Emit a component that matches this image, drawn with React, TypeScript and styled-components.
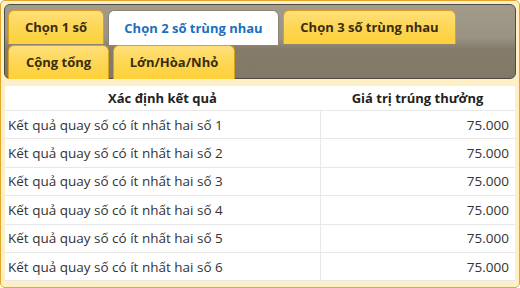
import React from "react";
import styled, { createGlobalStyle } from "styled-components";

const GlobalStyle = createGlobalStyle`
  html, body {
    margin: 0;
    padding: 0;
    background: #ffffff;
  }
  body {
    font-family: "Open Sans", "DejaVu Sans", sans-serif;
  }
`;

const Frame = styled.div`
  box-sizing: border-box;
  width: 520px;
  height: 288px;
  border: 1px solid #e2a62a;
  border-radius: 5px;
  background: #fdf0c6;
  padding: 3px 3px 0 3px;
`;

const TabBar = styled.div`
  box-sizing: border-box;
  height: 75px;
  border: 1px solid #4e4a42;
  border-radius: 6px;
  background: linear-gradient(#a29a8b 0%, #9a9283 45%, #857c6c 60%, #817867 100%);
  padding: 5px 3px 0 3px;
  display: flex;
  flex-wrap: wrap;
  align-content: flex-start;
  column-gap: 4px;
  row-gap: 1px;
`;

const Tab = styled.div<{ $active?: boolean; $w: number }>`
  box-sizing: border-box;
  width: ${(p) => p.$w}px;
  height: ${(p) => (p.$active ? 35 : 34)}px;
  border: 1px solid ${(p) => (p.$active ? "#8a8478" : "#d9a21d")};
  border-bottom: none;
  border-radius: 6px 6px 0 0;
  background: ${(p) =>
    p.$active ? "#ffffff" : "linear-gradient(#fee07a 0%, #fdd654 50%, #fcd139 100%)"};
  color: ${(p) => (p.$active ? "#1a6fbf" : "#3a2c10")};
  font-size: 13px;
  font-weight: 700;
  display: flex;
  align-items: center;
  justify-content: center;
  padding-bottom: 1px;
  margin-bottom: ${(p) => (p.$active ? -1 : 0)}px;
`;

const Table = styled.div`
  margin: 7px 1px 0 1px;
  background: #ffffff;
  display: grid;
  grid-template-columns: 315px 1fr;
`;

const HeadCell = styled.div`
  height: 25px;
  box-sizing: border-box;
  display: flex;
  align-items: center;
  justify-content: center;
  font-size: 13px;
  font-weight: 700;
  color: #222222;
  border-bottom: 1px solid #e8e8e8;
`;

const Cell = styled.div<{ $right?: boolean }>`
  height: 28.4px;
  box-sizing: border-box;
  display: flex;
  align-items: center;
  justify-content: ${(p) => (p.$right ? "flex-end" : "flex-start")};
  padding: 0 ${(p) => (p.$right ? 6 : 3)}px 0 ${(p) => (p.$right ? 0 : 3)}px;
  font-size: 13.5px;
  color: #333333;
  border-bottom: 1px solid #e8e8e8;
  border-left: ${(p) => (p.$right ? "1px solid #e8e8e8" : "none")};
`;

const tabs = [
  { label: "Chọn 1 số", w: 96 },
  { label: "Chọn 2 số trùng nhau", w: 171, active: true },
  { label: "Chọn 3 số trùng nhau", w: 173 },
  { label: "Cộng tổng", w: 101 },
  { label: "Lớn/Hòa/Nhỏ", w: 122 },
];

const rows = [1, 2, 3, 4, 5, 6];

export default function App() {
  return (
    <>
      <GlobalStyle />
      <Frame>
        <TabBar>
          {tabs.map((t) => (
            <Tab key={t.label} $active={t.active} $w={t.w}>
              {t.label}
            </Tab>
          ))}
        </TabBar>
        <Table>
          <HeadCell>Xác định kết quả</HeadCell>
          <HeadCell>Giá trị trúng thưởng</HeadCell>
          {rows.map((n) => (
            <React.Fragment key={n}>
              <Cell>Kết quả quay số có ít nhất hai số {n}</Cell>
              <Cell $right>75.000</Cell>
            </React.Fragment>
          ))}
        </Table>
      </Frame>
    </>
  );
}
